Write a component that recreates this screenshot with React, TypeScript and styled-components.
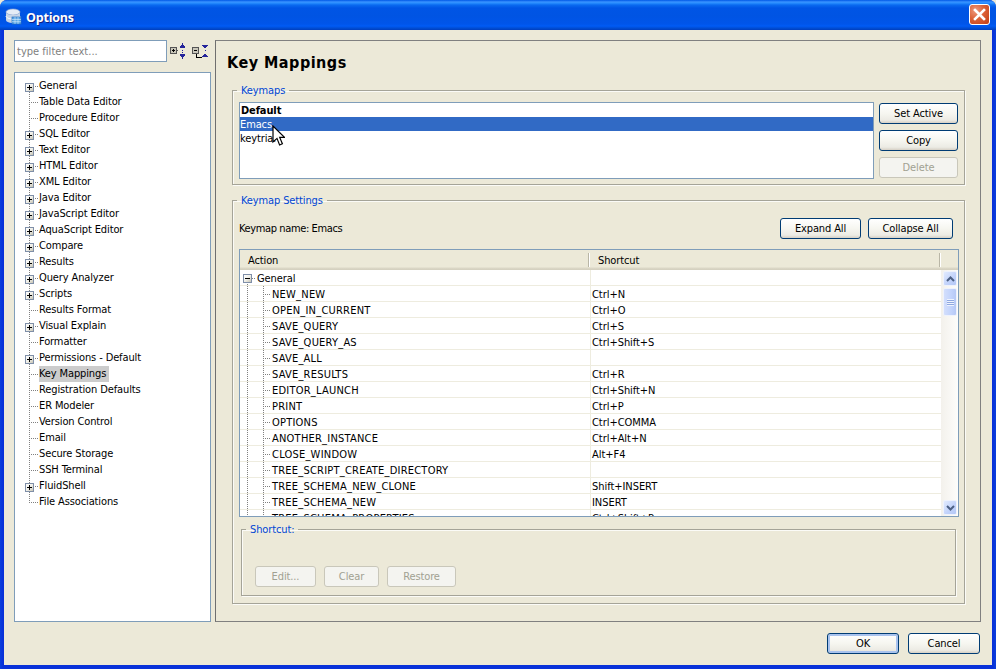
import React from "react";
import styled, { createGlobalStyle } from "styled-components";

const Global = createGlobalStyle`
  html, body { margin: 0; padding: 0; background: #ECE9D8; }
  * { box-sizing: border-box; }
  body { font-family: "DejaVu Sans Condensed", "DejaVu Sans", Tahoma, sans-serif; font-stretch: condensed; font-size: 11px; color: #000; letter-spacing: -0.12px; }
`;

const Frame = styled.div`
  position: relative;
  width: 996px;
  height: 669px;
  display: flex;
  flex-direction: column;
  overflow: hidden;
  border-radius: 7px 7px 0 0;
  background: linear-gradient(to right, #0a3fdc 0, #0831d9 3px, #0831d9 993px, #0a3fdc 996px);
`;
const TitleBar = styled.div`
  height: 30px;
  flex: none;
  display: flex;
  align-items: center;
  padding: 2px 6px 0 5px;
  gap: 4px;
  background: linear-gradient(to bottom, #0058e6 0, #3a93ff 2px, #288eff 3px, #0a6af0 5px, #0055e5 8px, #0054e3 16px, #0055ea 24px, #005bf5 26px, #0047c8 29px, #003dc0 30px);
`;
const TitleText = styled.div`
  flex: 1;
  color: #fff;
  font-family: "Open Sans", sans-serif;
  font-stretch: normal;
  font-weight: 700;
  font-size: 12.5px;
  letter-spacing: -0.2px;
  padding-top: 2px;
  text-shadow: 1px 1px 0 #0f1f8a;
`;
const CloseBox = styled.div`
  width: 21px;
  height: 21px;
  margin-top: -3px;
  border: 1px solid #fff;
  border-radius: 3px;
  display: flex;
  align-items: center;
  justify-content: center;
  background: radial-gradient(circle at 30% 30%, #ee9a7e 0, #dc6238 45%, #c13d14 100%);
`;
const Client = styled.div`
  flex: 1;
  min-height: 0;
  display: flex;
  flex-direction: column;
  margin: 0 4px 4px;
  background: #ece9d8;
`;
const Main = styled.div`
  display: flex;
  gap: 4px;
  height: 592px;
  padding: 10px 11px 0 10px;
`;
const Sidebar = styled.div`
  width: 197px;
  flex: none;
  display: flex;
  flex-direction: column;
  gap: 10px;
`;
const FilterRow = styled.div`
  display: flex;
  align-items: center;
  height: 22px;
`;
const FilterInput = styled.div`
  width: 153px;
  height: 22px;
  background: #fff;
  border: 1px solid #7f9db9;
  color: #808080;
  padding: 1px 2px 0;
  line-height: 20px;
  letter-spacing: 0.02px;
`;
const FilterIcon = styled.svg<{ $ml: number }>`
  flex: none;
  margin-left: ${(p) => p.$ml}px;
`;
const TreeBox = styled.div`
  flex: 1;
  background: #fff;
  border: 1px solid #7f9db9;
  padding-top: 5px;
`;

const dots = `repeating-linear-gradient(to bottom, #808080 0 1px, transparent 1px 2px)`;
const dotsH = `repeating-linear-gradient(to right, #808080 0 1px, transparent 1px 2px)`;

const TreeRow = styled.div<{ $edge: "first" | "last" | "mid" }>`
  height: 16px;
  display: flex;
  padding-left: 10px;
  background-image: ${dots}, ${dotsH};
  background-repeat: no-repeat;
  background-size: 1px ${(p) => (p.$edge === "mid" ? "16px" : "8px")}, 9px 1px;
  background-position: 14px ${(p) => (p.$edge === "first" ? "8px" : "0")}, 14px 8px;
`;
const ToggleSlot = styled.div`
  width: 9px;
  height: 9px;
  margin: 5px 5px 0 0;
  flex: none;
`;
const ToggleBox = styled.div`
  width: 9px;
  height: 9px;
  border: 1px solid #7f8fa8;
  background: linear-gradient(135deg, #fff 0, #f0efe8 50%, #c6c3b4 100%);
  display: flex;
  align-items: center;
  justify-content: center;
`;
const TreeLabel = styled.span<{ $selected?: boolean }>`
  line-height: 16px;
  height: 16px;
  white-space: nowrap;
  background: ${(p) => (p.$selected ? "#cccccc" : "transparent")};
  padding-right: ${(p) => (p.$selected ? "3px" : "0")};
`;

const Panel = styled.div`
  flex: 1;
  min-width: 0;
  border: 1px solid #808080;
  border-left-color: #6f6f6f;
  padding: 12px 15px 0 16px;
  display: flex;
  flex-direction: column;
`;
const Heading = styled.h1`
  margin: 0 0 0 -16px;
  height: 20px;
  line-height: 20px;
  font-size: 16px;
  font-weight: 700;
  padding-left: 11px;
  letter-spacing: 0.5px;
`;
const Group = styled.fieldset<{ $mt: number; $pad: string; $inset?: boolean }>`
  margin: ${(p) => p.$mt}px ${(p) => (p.$inset ? "3px" : "0")} 0 ${(p) => (p.$inset ? "2px" : "0")};
  padding: ${(p) => p.$pad};
  min-width: 0;
  border: 1px solid #a5a498;
  box-shadow: 1px 1px 0 #fbfbf7, inset 1px 1px 0 #fbfbf7;
`;
const Legend = styled.legend<{ $offset: number }>`
  color: #0046d5;
  line-height: 13px;
  padding: 0 4px;
  margin-left: ${(p) => p.$offset}px;
`;
const KeymapBody = styled.div`
  display: flex;
  gap: 5px;
`;
const KeymapList = styled.div`
  flex: 1;
  height: 77px;
  background: #fff;
  border: 1px solid #7f9db9;
`;
const KeymapItem = styled.div<{ $selected?: boolean; $bold?: boolean }>`
  height: 14px;
  line-height: 16px;
  padding-left: ${(p) => (p.$bold ? "1px" : "0")};
  font-weight: ${(p) => (p.$bold ? 700 : 400)};
  background: ${(p) => (p.$selected ? "#316AC5" : "transparent")};
  color: ${(p) => (p.$selected ? "#fff" : "#000")};
`;
const ButtonColumn = styled.div`
  width: 79px;
  flex: none;
  display: flex;
  flex-direction: column;
  gap: 6px;
  padding-top: 1px;
`;
const XpButton = styled.button<{ $w?: number; $default?: boolean }>`
  font: inherit;
  font-stretch: condensed;
  letter-spacing: inherit;
  height: 21px;
  width: ${(p) => (p.$w ? `${p.$w}px` : "100%")};
  padding: 0;
  color: #000;
  border: 1px solid #003c74;
  border-radius: 3px;
  background: linear-gradient(to bottom, #fff 0, #f6f6f0 50%, #ecebe4 85%, #d6d0c5 100%);
  box-shadow: ${(p) => (p.$default ? "inset 0 0 0 2px #a9c3ee" : "none")};
  flex: none;
  &:disabled {
    color: #a1a192;
    border-color: #c9c7ba;
    background: #f4f4f0;
  }
`;
const SettingsHeader = styled.div`
  display: flex;
  align-items: center;
  height: 21px;
  gap: 7px;
  padding-right: 6px;
`;
const NameLabel = styled.div`
  flex: 1;
  letter-spacing: -0.38px;
`;
const Table = styled.div`
  margin-top: 10px;
  height: 268px;
  border: 1px solid #7f9db9;
  display: flex;
  flex-direction: column;
  overflow: hidden;
`;
const HeaderRow = styled.div`
  height: 20px;
  flex: none;
  display: flex;
  padding-top: 3px;
  background: linear-gradient(to bottom, #ece9d8 0, #ece9d8 17px, #dcd8c7 18px, #d3cfbe 20px);
`;
const HeaderCell = styled.div<{ $w: number; $pad: number }>`
  width: ${(p) => p.$w}px;
  flex: none;
  height: 14px;
  line-height: 16px;
  padding-left: ${(p) => p.$pad}px;
  border-right: 1px solid #b9b6a6;
  box-shadow: 1px 0 0 #fff;
`;
const TableBody = styled.div`
  flex: 1;
  min-height: 0;
  display: flex;
  background: #fff;
`;
const Rows = styled.div`
  flex: 1;
  min-width: 0;
  overflow: hidden;
`;
const Row = styled.div`
  height: 16px;
  display: grid;
  grid-template-columns: 351px 1fr;
  border-bottom: 1px solid #eeecdf;
`;
const ActionCell = styled.div<{ $depth: number }>`
  display: flex;
  align-items: flex-start;
  white-space: nowrap;
  line-height: 17px;
  height: 15px;
  padding-left: ${(p) => (p.$depth ? 32 : 3)}px;
  letter-spacing: ${(p) => (p.$depth ? "0.22px" : "-0.1px")};
  border-right: 1px solid #eeecdf;
  background-image: ${dots}, ${(p) => (p.$depth ? `${dots}, ${dotsH}` : dotsH)};
  background-repeat: no-repeat;
  background-size: ${(p) => (p.$depth ? "1px 16px, 1px 16px, 8px 1px" : "1px 2px, 4px 1px")};
  background-position: ${(p) => (p.$depth ? "7px 0, 23px 0, 23px 8px" : "7px 14px, 12px 8px")};
`;
const RootToggle = styled(ToggleBox)`
  width: 9px;
  height: 9px;
  margin-right: 5px;
  margin-top: 4px;
`;
const ShortcutCell = styled.div`
  padding-left: 1px;
  line-height: 17px;
  height: 15px;
  white-space: nowrap;
  letter-spacing: -0.05px;
`;
const Scrollbar = styled.div`
  width: 17px;
  flex: none;
  background: linear-gradient(to right, #f3f1ec 0, #fdfdfb 100%);
  display: flex;
  flex-direction: column;
  padding: 1px 1px 1px 2px;
`;
const ScrollBtn = styled.div`
  height: 15px;
  flex: none;
  border: 1px solid #eef2fd;
  border-radius: 2px;
  background: linear-gradient(to bottom right, #e2ebfe 0, #c1d2fb 60%, #b4c8f6 100%);
  display: flex;
  align-items: center;
  justify-content: center;
`;
const Thumb = styled.div`
  height: 28px;
  margin-top: 2px;
  flex: none;
  border: 1px solid #eef2fd;
  border-radius: 2px;
  background: linear-gradient(to right, #d3dffc 0, #c2d3fc 60%, #b6c9f6 100%);
  display: flex;
  align-items: center;
  justify-content: center;
`;
const Grip = styled.div`
  width: 7px;
  height: 7px;
  background: repeating-linear-gradient(to bottom, #eef3fe 0 1px, #8fa8e0 1px 2px);
`;
const ScrollSpace = styled.div`
  flex: 1;
`;
const ShortcutButtons = styled.div`
  display: flex;
  gap: 8px;
  margin-top: 30px;
`;
const Footer = styled.div`
  flex: 1;
  display: flex;
  justify-content: flex-end;
  gap: 9px;
  padding: 11px 12px 0 0;
`;
const Cursor = styled.svg`
  position: absolute;
  left: 272px;
  top: 125px;
`;

const treeItems: [string, boolean][] = [
  ["General", true], ["Table Data Editor", false], ["Procedure Editor", false], ["SQL Editor", true],
  ["Text Editor", true], ["HTML Editor", true], ["XML Editor", true], ["Java Editor", true],
  ["JavaScript Editor", true], ["AquaScript Editor", true], ["Compare", true], ["Results", true],
  ["Query Analyzer", true], ["Scripts", true], ["Results Format", false], ["Visual Explain", true],
  ["Formatter", false], ["Permissions - Default", true], ["Key Mappings", false], ["Registration Defaults", false],
  ["ER Modeler", false], ["Version Control", false], ["Email", false], ["Secure Storage", false],
  ["SSH Terminal", false], ["FluidShell", true], ["File Associations", false],
];

const actions: [string, string][] = [
  ["NEW_NEW", "Ctrl+N"], ["OPEN_IN_CURRENT", "Ctrl+O"], ["SAVE_QUERY", "Ctrl+S"], ["SAVE_QUERY_AS", "Ctrl+Shift+S"],
  ["SAVE_ALL", ""], ["SAVE_RESULTS", "Ctrl+R"], ["EDITOR_LAUNCH", "Ctrl+Shift+N"], ["PRINT", "Ctrl+P"],
  ["OPTIONS", "Ctrl+COMMA"], ["ANOTHER_INSTANCE", "Ctrl+Alt+N"], ["CLOSE_WINDOW", "Alt+F4"],
  ["TREE_SCRIPT_CREATE_DIRECTORY", ""], ["TREE_SCHEMA_NEW_CLONE", "Shift+INSERT"], ["TREE_SCHEMA_NEW", "INSERT"],
  ["TREE_SCHEMA_PROPERTIES", "Ctrl+Shift+P"],
];

const Sign = ({ plus }: { plus: boolean }) => (
  <svg width="7" height="7" viewBox="0 0 7 7" shapeRendering="crispEdges">
    <rect x="1" y="3" width="5" height="1" fill="#000" />
    {plus && <rect x="3" y="1" width="1" height="5" fill="#000" />}
  </svg>
);

const AppIcon = () => (
  <svg width="17" height="17" viewBox="0 0 17 17">
    <ellipse cx="8" cy="4" rx="7" ry="3" fill="#e4ecf6" stroke="#9fb2cc" strokeWidth="0.6" />
    <path d="M1 4v8c0 1.6 3 3 7 3s7-1.4 7-3V4c0 1.6-3 3-7 3S1 5.6 1 4z" fill="#c6d4e6" />
    <path d="M1 8c0 1.6 3 3 7 3s7-1.4 7-3" fill="none" stroke="#f4f7fb" strokeWidth="1" />
    <rect x="7" y="9" width="9" height="7" fill="#5aa6e6" stroke="#2a6fc0" strokeWidth="0.7" />
    <path d="M7 11.5h9M7 13.7h9M10 9v7M13 9v7" stroke="#d8ecfb" strokeWidth="0.6" />
  </svg>
);

export default function App() {
  return (
    <>
      <Global />
      <Frame>
        <TitleBar>
          <AppIcon />
          <TitleText>Options</TitleText>
          <CloseBox>
            <svg width="15" height="15" viewBox="0 0 15 15">
              <path d="M3 3l9 9M12 3l-9 9" stroke="#fff" strokeWidth="2.6" strokeLinecap="square" />
            </svg>
          </CloseBox>
        </TitleBar>
        <Client>
          <Main>
            <Sidebar>
              <FilterRow>
                <FilterInput>type filter text...</FilterInput>
                <FilterIcon $ml={3} width="16" height="16" viewBox="0 0 16 16" shapeRendering="crispEdges">
                  <rect x="0.5" y="4.5" width="6" height="6" fill="#c9c7ba" stroke="#555" />
                  <rect x="2" y="7" width="3" height="1" fill="#000" />
                  <rect x="3" y="6" width="1" height="3" fill="#000" />
                  <path d="M7 7.5h1" stroke="#555" />
                  <path d="M12.5 0l3 5h-6z" fill="#24249a" />
                  <path d="M12 7h1v1h-1zM12 9h1v1h-1z" fill="#24249a" />
                  <path d="M12.5 16l3-5h-6z" fill="#24249a" />
                </FilterIcon>
                <FilterIcon $ml={6} width="16" height="16" viewBox="0 0 16 16" shapeRendering="crispEdges">
                  <rect x="0.5" y="4.5" width="6" height="6" fill="#c9c7ba" stroke="#555" />
                  <rect x="2" y="7" width="3" height="1" fill="#000" />
                  <path d="M4.5 11v3.5H10" fill="none" stroke="#000" />
                  <path d="M10 2h6l-3 4z" fill="#24249a" />
                  <path d="M13 7.5h0.5" stroke="#24249a" />
                  <path d="M13 10l3 4h-6z" fill="#24249a" />
                </FilterIcon>
              </FilterRow>
              <TreeBox>
                {treeItems.map(([label, hasChildren], i) => (
                  <TreeRow key={label} $edge={i === 0 ? "first" : i === treeItems.length - 1 ? "last" : "mid"}>
                    <ToggleSlot>
                      {hasChildren && (
                        <ToggleBox>
                          <Sign plus />
                        </ToggleBox>
                      )}
                    </ToggleSlot>
                    <TreeLabel $selected={label === "Key Mappings"}>{label}</TreeLabel>
                  </TreeRow>
                ))}
              </TreeBox>
            </Sidebar>
            <Panel>
              <Heading>Key Mappings</Heading>
              <Group $mt={11} $pad="5px 6px 5px 6px">
                <Legend $offset={-2}>Keymaps</Legend>
                <KeymapBody>
                  <KeymapList>
                    <KeymapItem $bold>Default</KeymapItem>
                    <KeymapItem $selected>Emacs</KeymapItem>
                    <KeymapItem>keytrial</KeymapItem>
                  </KeymapList>
                  <ButtonColumn>
                    <XpButton>Set Active</XpButton>
                    <XpButton>Copy</XpButton>
                    <XpButton disabled>Delete</XpButton>
                  </ButtonColumn>
                </KeymapBody>
              </Group>
              <Group $mt={9} $pad="11px 5px 7px 6px">
                <Legend $offset={-2}>Keymap Settings</Legend>
                <SettingsHeader>
                  <NameLabel>Keymap name: Emacs</NameLabel>
                  <XpButton $w={81}>Expand All</XpButton>
                  <XpButton $w={85}>Collapse All</XpButton>
                </SettingsHeader>
                <Table>
                  <HeaderRow>
                    <HeaderCell $w={349} $pad={8}>Action</HeaderCell>
                    <HeaderCell $w={351} $pad={9}>Shortcut</HeaderCell>
                  </HeaderRow>
                  <TableBody>
                    <Rows>
                      <Row>
                        <ActionCell $depth={0}>
                          <RootToggle>
                            <Sign plus={false} />
                          </RootToggle>
                          General
                        </ActionCell>
                        <ShortcutCell />
                      </Row>
                      {actions.map(([name, key]) => (
                        <Row key={name}>
                          <ActionCell $depth={1}>{name}</ActionCell>
                          <ShortcutCell>{key}</ShortcutCell>
                        </Row>
                      ))}
                    </Rows>
                    <Scrollbar>
                      <ScrollBtn>
                        <svg width="9" height="6" viewBox="0 0 9 6">
                          <path d="M1 5l3.5-3.5L8 5" fill="none" stroke="#4d6185" strokeWidth="2" />
                        </svg>
                      </ScrollBtn>
                      <Thumb>
                        <Grip />
                      </Thumb>
                      <ScrollSpace />
                      <ScrollBtn>
                        <svg width="9" height="6" viewBox="0 0 9 6">
                          <path d="M1 1l3.5 3.5L8 1" fill="none" stroke="#4d6185" strokeWidth="2" />
                        </svg>
                      </ScrollBtn>
                    </Scrollbar>
                  </TableBody>
                </Table>
                <Group $inset $mt={6} $pad="0 9px 8px 13px">
                  <Legend $offset={-9}>Shortcut:</Legend>
                  <ShortcutButtons>
                    <XpButton disabled $w={61}>Edit...</XpButton>
                    <XpButton disabled $w={55}>Clear</XpButton>
                    <XpButton disabled $w={69}>Restore</XpButton>
                  </ShortcutButtons>
                </Group>
              </Group>
            </Panel>
          </Main>
          <Footer>
            <XpButton $w={72} $default>OK</XpButton>
            <XpButton $w={72}>Cancel</XpButton>
          </Footer>
        </Client>
        <Cursor width="13" height="22" viewBox="0 0 13 22">
          <path d="M1 1v16l4-3.6 2.6 6.6 2.8-1.2-2.7-6.4H12.5z" fill="#fff" stroke="#000" strokeWidth="1.2" />
        </Cursor>
      </Frame>
    </>
  );
}
